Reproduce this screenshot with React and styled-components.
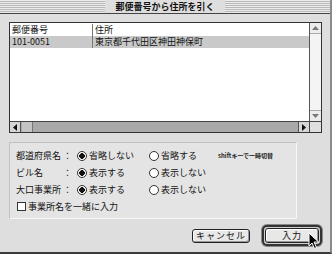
import React from 'react';
import styled, { createGlobalStyle } from 'styled-components';

const Global = createGlobalStyle`
  html, body { margin: 0; padding: 0; background: #dcdcdc; }
  * { box-sizing: border-box; }
  body { font-family: "Noto Sans CJK JP", "Noto Sans", sans-serif; }
`;

const rows = [
  { label: '都道府県名', on: '省略しない', off: '省略する', note: 'shiftキーで一時切替' },
  { label: 'ビル名', on: '表示する', off: '表示しない' },
  { label: '大口事業所', on: '表示する', off: '表示しない' },
];

function App() {
  return (
    <>
      <Global />
      <Window>
        <TitleBar>
          <Title>郵便番号から住所を引く</Title>
        </TitleBar>

        <ListBox>
          <ListArea>
            <Row>
              <Cell w={83}>郵便番号</Cell>
              <Cell>住所</Cell>
            </Row>
            <Row selected>
              <Cell w={83}>101-0051</Cell>
              <Cell>東京都千代田区神田神保町</Cell>
            </Row>
          </ListArea>
          <VScroll>
            <Arrow>
              <svg width="7" height="4" viewBox="0 0 7 4"><path d="M0 4 L3.5 0 L7 4Z" fill="#777" /></svg>
            </Arrow>
            <VTrack />
            <Arrow top>
              <svg width="7" height="4" viewBox="0 0 7 4"><path d="M0 0 L3.5 4 L7 0Z" fill="#777" /></svg>
            </Arrow>
          </VScroll>
          <HScroll>
            <HArrow>
              <svg width="4" height="7" viewBox="0 0 4 7"><path d="M4 0 L0 3.5 L4 7Z" fill="#111" /></svg>
            </HArrow>
            <Thumb />
            <HTrack />
            <HArrow left>
              <svg width="4" height="7" viewBox="0 0 4 7"><path d="M0 0 L4 3.5 L0 7Z" fill="#111" /></svg>
            </HArrow>
          </HScroll>
          <Corner />
        </ListBox>

        <Group>
          {rows.map((r) => (
            <OptRow key={r.label}>
              <Label>{r.label}</Label>
              <Colon>：</Colon>
              <Choice w={72}><Radio checked />{r.on}</Choice>
              <Choice w={69}><Radio />{r.off}</Choice>
              {r.note && <Note>{r.note}</Note>}
            </OptRow>
          ))}
          <CheckRow>
            <Box />事業所名を一緒に入力
          </CheckRow>
        </Group>

        <Buttons>
          <Button>キャンセル</Button>
          <DefaultRing>
            <Button wide>入力</Button>
            <Cursor width="12" height="18" viewBox="0 0 12 18">
              <path d="M1 1 L1 14 L4 11 L6.5 16.5 L8.5 15.5 L6 10 L10.5 10 Z" fill="#000" stroke="#fff" strokeWidth="1" />
            </Cursor>
          </DefaultRing>
        </Buttons>
      </Window>
    </>
  );
}

const Window = styled.div`
  width: 332px;
  height: 254px;
  background: #dedede;
  border-right: 2px solid #8a8a8a;
  border-bottom: 2px solid #3a3a3a;
  display: flex;
  flex-direction: column;
  overflow: hidden;
`;

const TitleBar = styled.div`
  height: 14px;
  flex-shrink: 0;
  border-bottom: 1px solid #444;
  background: repeating-linear-gradient(to bottom, #ececec 0 1px, #b8b8b8 1px 2px);
  display: flex;
  justify-content: center;
  align-items: center;
`;

const Title = styled.div`
  background: #dedede;
  padding: 0 10px;
  white-space: nowrap;
  font-size: 9px;
  font-weight: 700;
  line-height: 13px;
  color: #111;
`;

const ListBox = styled.div`
  margin: 8px 8px 0 9px;
  height: 111px;
  flex-shrink: 0;
  border: 1px solid #333;
  background: #fff;
  display: grid;
  grid-template-columns: 1fr 12px;
  grid-template-rows: 1fr 11px;
`;

const ListArea = styled.div`
  padding-top: 1px;
`;

const Row = styled.div`
  display: flex;
  height: 12px;
  align-items: center;
  background: ${(p) => (p.selected ? '#c9c9c9' : '#fff')};
  font-size: 9px;
  color: #111;
  line-height: 12px;
`;

const Cell = styled.div`
  width: ${(p) => (p.w ? `${p.w}px` : 'auto')};
  padding-left: 2px;
  border-right: ${(p) => (p.w ? '1px solid #777' : 'none')};
  height: 100%;
  white-space: nowrap;
`;

const VScroll = styled.div`
  border-left: 1px solid #555;
  display: flex;
  flex-direction: column;
  background: #f2f2f2;
`;

const Arrow = styled.div`
  height: 11px;
  display: flex;
  align-items: center;
  justify-content: center;
  background: #ececec;
  border-bottom: ${(p) => (p.top ? 'none' : '1px solid #aaa')};
  border-top: ${(p) => (p.top ? '1px solid #aaa' : 'none')};
`;

const VTrack = styled.div`
  flex: 1;
  background: #f4f4f4;
`;

const HScroll = styled.div`
  border-top: 1px solid #444;
  display: flex;
  background: #a9a9a9;
`;

const HArrow = styled.div`
  width: 11px;
  display: flex;
  align-items: center;
  justify-content: center;
  background: #d6d6d6;
  border-right: ${(p) => (p.left ? 'none' : '1px solid #555')};
  border-left: ${(p) => (p.left ? '1px solid #555' : 'none')};
`;

const Thumb = styled.div`
  width: 11px;
  margin-left: 1px;
  background: #c4c4c4;
  border-right: 1px solid #777;
`;

const HTrack = styled.div`
  flex: 1;
`;

const Corner = styled.div`
  border-top: 1px solid #444;
  border-left: 1px solid #444;
  background: #dedede;
`;

const Group = styled.div`
  margin: 9px 0 0 9px;
  width: 288px;
  height: 77px;
  flex-shrink: 0;
  background: #e4e4e4;
  border: 1px solid #c2c2c2;
  border-right-color: #f6f6f6;
  border-bottom-color: #f6f6f6;
  padding: 4px 0 0 6px;
  display: flex;
  flex-direction: column;
`;

const OptRow = styled.div`
  display: flex;
  align-items: center;
  height: 17px;
  font-size: 9px;
  color: #111;
`;

const Label = styled.span`
  width: 47px;
  white-space: nowrap;
`;

const Colon = styled.span`
  width: 14px;
`;

const Choice = styled.span`
  display: flex;
  align-items: center;
  gap: 2px;
  width: ${(p) => p.w}px;
  white-space: nowrap;
`;

const Radio = styled.span`
  width: 10px;
  height: 10px;
  border-radius: 50%;
  border: 1px solid #333;
  background: ${(p) => (p.checked ? 'radial-gradient(circle, #111 0 2.6px, #fff 3px)' : '#fff')};
  flex-shrink: 0;
`;

const Note = styled.span`
  font-size: 6px;
  color: #222;
  white-space: nowrap;
  font-weight: 700;
`;

const CheckRow = styled.div`
  display: flex;
  align-items: center;
  gap: 2px;
  height: 17px;
  margin-left: 1px;
  font-size: 9px;
  color: #111;
`;

const Box = styled.span`
  width: 9px;
  height: 9px;
  border: 1px solid #333;
  background: #fff;
`;

const Buttons = styled.div`
  display: flex;
  justify-content: flex-end;
  align-items: center;
  gap: 12px;
  margin: 6px 8px 0 0;
`;

const Button = styled.div`
  width: ${(p) => (p.wide ? '54px' : '58px')};
  height: ${(p) => (p.wide ? '15px' : '14px')};
  border: 1px solid #222;
  border-radius: 3px;
  background: #e8e8e8;
  box-shadow: inset 1px 1px 0 #fff, inset -1px -1px 0 #999;
  font-size: 9px;
  line-height: 12px;
  color: #111;
  display: flex;
  align-items: center;
  justify-content: center;
  letter-spacing: 1px;
`;

const DefaultRing = styled.div`
  position: relative;
  border: 2px solid #333;
  border-radius: 5px;
  padding: 1px;
  background: #d0d0d0;
  box-shadow: 0 0 0 1px #888;
`;

const Cursor = styled.svg`
  position: absolute;
  left: 44px;
  top: 5px;
`;

export default App;
